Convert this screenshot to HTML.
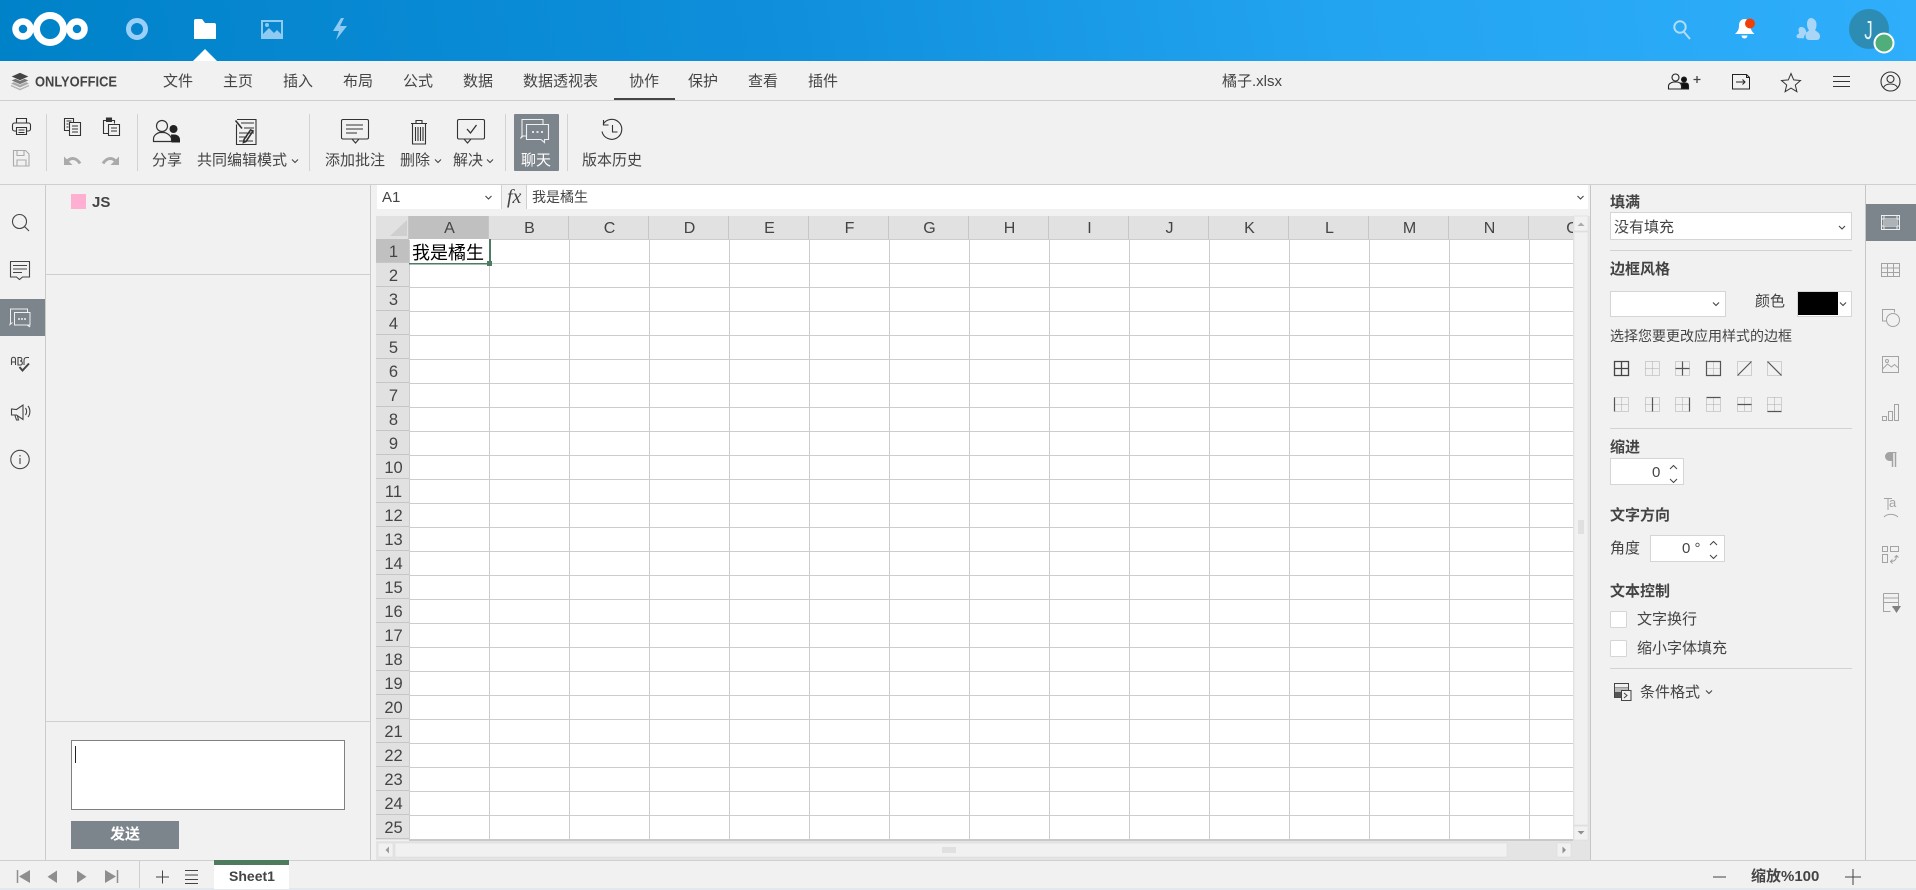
<!DOCTYPE html>
<html lang="zh"><head><meta charset="utf-8"><title>橘子.xlsx</title>
<style>
html,body{margin:0;padding:0;width:1916px;height:890px;overflow:hidden;background:#f1f1f1}
body{font-family:"Liberation Sans","Noto Sans CJK SC",sans-serif;color:#444;position:relative}
.t{position:absolute;white-space:nowrap;line-height:20px;height:20px;font-size:15px;color:#444;margin-top:1px}
.n{margin-top:0}
.b{font-weight:bold}
.c{text-align:center}
#hd{position:absolute;left:0;top:0;width:1916px;height:61px;background:linear-gradient(80deg,#0082c9 0%,#0f8fdb 40%,#23a4f0 70%,#2eaefb 100%)}
#grid{position:absolute;left:409px;top:239px;width:1164px;height:601px;background-color:#fff;background-image:linear-gradient(to right,transparent 79px,#cdcdcd 79px),linear-gradient(to bottom,transparent 23px,#cdcdcd 23px);background-size:80px 24px;background-position:1px 1px}
#cols{position:absolute;left:409px;top:216px;width:1164px;height:23px;overflow:hidden;display:flex;background:#e1e1e1}
#cols div{flex:0 0 80px;box-sizing:border-box;height:23px;line-height:26px;text-align:center;font-size:16px;color:#444;border-right:1px solid #c6c6c6;position:relative;left:1px;text-indent:2px}
#cols div.s{background:#c0c0c0;margin-left:-1px}
#rows{position:absolute;left:376px;top:239px;width:33px;height:601px;overflow:hidden;background:#e1e1e1}
#rows div{height:24px;box-sizing:border-box;line-height:26px;text-align:center;font-size:16.5px;color:#444;border-bottom:1px solid #c6c6c6;text-indent:2px}
#rows div.s{background:#c0c0c0}
svg{position:absolute;left:0;top:0}
</style></head><body>
<div id="hd"></div>
<div id="grid"></div>
<div id="cols"><div class="s">A</div><div>B</div><div>C</div><div>D</div><div>E</div><div>F</div><div>G</div><div>H</div><div>I</div><div>J</div><div>K</div><div>L</div><div>M</div><div>N</div><div style="text-indent:8px">O</div></div>
<div id="rows"><div class="s">1</div><div>2</div><div>3</div><div>4</div><div>5</div><div>6</div><div>7</div><div>8</div><div>9</div><div>10</div><div>11</div><div>12</div><div>13</div><div>14</div><div>15</div><div>16</div><div>17</div><div>18</div><div>19</div><div>20</div><div>21</div><div>22</div><div>23</div><div>24</div><div>25</div></div>

<svg width="1916" height="890" viewBox="0 0 1916 890" fill="none">
<!-- structural lines -->
<rect x="0" y="100" width="1916" height="1" fill="#cfcfcf"/>
<rect x="0" y="184" width="1916" height="1" fill="#cfcfcf"/>
<rect x="45" y="185" width="1" height="675" fill="#cbcbcb"/>
<rect x="370" y="185" width="1" height="675" fill="#cbcbcb"/>
<rect x="46" y="274" width="324" height="1" fill="#cfcfcf"/>
<rect x="46" y="721" width="324" height="1" fill="#cfcfcf"/>
<rect x="1590" y="185" width="1" height="675" fill="#c6c6c6"/>
<rect x="1865" y="185" width="1" height="675" fill="#c6c6c6"/>
<rect x="0" y="860" width="1916" height="1" fill="#cfcfcf"/>
<rect x="0" y="888" width="1916" height="2" fill="#e3e8ef"/>
<rect x="139" y="861" width="1" height="27" fill="#cfcfcf"/>
<!-- toolbar separators -->
<g fill="#d2d2d2"><rect x="46" y="114" width="1" height="57"/><rect x="137" y="114" width="1" height="57"/><rect x="309" y="114" width="1" height="57"/><rect x="505" y="114" width="1" height="57"/><rect x="567" y="114" width="1" height="57"/></g>
<!-- active tab underline -->
<rect x="614" y="98" width="61" height="2" fill="#444"/>
<!-- nextcloud logo -->
<g stroke="#fff"><circle cx="23" cy="29" r="7.5" stroke-width="6.5"/><circle cx="50" cy="29" r="13.5" stroke-width="7"/><circle cx="77" cy="29" r="7.5" stroke-width="6.5"/></g>
<circle cx="137" cy="29" r="8.5" stroke="#9ad0f7" stroke-width="5"/>
<path d="M194 21a2 2 0 0 1 2-2h6l3 4h9a2 2 0 0 1 2 2v14h-22z" fill="#fff"/>
<path d="M193 61l12-12 12 12z" fill="#fff"/>
<path fill-rule="evenodd" d="M261 20h22v19h-22zM263 22v12l6-6 5 5 3-3 4 4v-12zM267 27a2 2 0 1 0 0-4 2 2 0 0 0 0 4z" fill="#8fcaf2"/>
<path d="M341 18l-8 13h6l-3 9 11-14h-7l4-8z" fill="#8fcaf2"/>
<!-- header right -->
<circle cx="1680" cy="27" r="5.7" stroke="#afdcf9" stroke-width="2"/><path d="M1684 32l6 7" stroke="#afdcf9" stroke-width="2"/>
<path d="M1744.500 19c-3.500 0-5.500 3-5.500 6.500 0 4.500-1.500 6-4 8.500h19.500c-2.500-2.500-4-4-4-8.500 0-3.500-2.500-6.500-6-6.500z" fill="#fff"/><path d="M1741.500 35.500h6a3 3 0 0 1-6 0z" fill="#fff"/>
<circle cx="1750" cy="23.500" r="5" fill="#f0400a"/>
<path d="M1811 18c-2.500 0-4 2.500-4 6 0 3 1 5 2 6-1 2-3.500 2-3.500 5 0 3 1 5 4 5h7c3 0 3.500-2 3.500-4 0-3-3-4-5-6 1-1 1.500-3 1.500-6 0-3.500-3-6-5.500-6z" fill="#a9d6f6"/><path d="M1801 27c-1.500 0-2.500 1.300-2.500 3 0 1.300.4 2.500.8 3-.8 1.300-2.800 1.300-2.800 3 0 1.800 1 2.200 2.500 2.200h5c0-2.800 1-3.800 2.500-5.200-.5-2-1-6-5.500-6z" fill="#a9d6f6"/>
<circle cx="1869" cy="29" r="20" fill="#2c8cb4"/>
<circle cx="1884" cy="43" r="9.500" fill="#4fae7a" stroke="#fff" stroke-width="2"/>
<!-- onlyoffice stack -->
<path d="M20 79.500l-9 4 9 4 9-4z" fill="#a8a8a8"/><path d="M20 76.500l-9 4 9 4 9-4z" fill="#777" stroke="#f1f1f1" stroke-width=".6"/><path d="M20 72.500l-9 4 9 4 9-4z" fill="#444" stroke="#f1f1f1" stroke-width=".6"/>
<path d="M11 85.500l9 4 9-4" stroke="#b5b5b5" stroke-width="1.500"/>
<text x="35" y="86.500" font-family="Liberation Sans" font-weight="bold" font-size="15" fill="#444" textLength="82" lengthAdjust="spacingAndGlyphs">ONLYOFFICE</text>
<!-- top right doc icons -->
<g stroke="#222" stroke-width="1.100">
<circle cx="1675.500" cy="77.500" r="3.500"/><path d="M1668.500 89v-3c0-2.500 3-3.500 5-4h4c2 .5 4 1.500 4 4v3z"/>
<circle cx="1684" cy="79.500" r="2.500" fill="#111"/><path d="M1681 83h5c1.500 0 2.500 1 2.500 3v3h-6z" fill="#111"/>
<path d="M1697 76v7M1693.500 79.500h7" stroke="#444" stroke-width="1.300"/>
<path d="M1732.500 74.500h14l3 3v11.500h-17zM1746.500 74.500v3h3M1736 82h9M1742.500 79.500l2.500 2.500-2.500 2.500" stroke-width="1"/>
<path d="M1791 73.500l2.700 6.400 6.800.6-5.200 4.500 1.600 6.700-5.900-3.600-5.900 3.600 1.600-6.700-5.200-4.500 6.800-.6z" stroke="#333" stroke-width="1"/>
<path d="M1833 76.500h17M1833 81.500h17M1833 86.500h17" stroke="#333" stroke-width="1.100"/>
<circle cx="1890.500" cy="81.500" r="9.500" stroke="#333"/><circle cx="1890.500" cy="79" r="3.500" stroke="#333"/><path d="M1883.500 87.500c1.500-3 4-3.500 7-3.500s5.500.5 7 3.500" stroke="#333"/>
</g>
<!-- toolbar icons -->
<g stroke="#333" stroke-width="1.100">
<path d="M16.500 123v-4.500h10v4.500M16.500 131h-2a2 2 0 0 1-2-2v-4a2 2 0 0 1 2-2h14a2 2 0 0 1 2 2v4a2 2 0 0 1-2 2h-2"/><path d="M16.500 127.500h10v7h-10zM18.500 130h6M18.500 132.500h6"/>
<path d="M13.500 150.500h12l3.500 3.500v12h-15.500zM17 150.500v5h7v-5M17 166v-6h9v6" stroke="#aaa"/>
<path d="M69 130.500h-4.500v-12h9v3.500"/><path d="M69.500 122.500h11v13h-11zM72 126h6M72 129h6M72 132h6M66.500 121h5M66.500 124h2M66.500 127h2"/>
<path d="M108 133.500h-4.500v-13h11v3"/><path d="M106.500 118h5v3.500h-5z" fill="#333"/><path d="M108.500 124.500h11v11h-11zM111 128h6M111 131h6"/>
</g>
<path d="M64 156.500v8.500h8.500z" fill="#aaa"/><path d="M67 161.500c3.500-4 9-4.500 13 2" stroke="#aaa" stroke-width="3"/>
<path d="M119 156.500v8.500h-8.500z" fill="#aaa"/><path d="M116 161.500c-3.500-4-9-4.500-13 2" stroke="#aaa" stroke-width="3"/>
<g stroke="#333" stroke-width="1.200">
<circle cx="162" cy="126" r="5.500"/><path d="M153.500 141.500v-2.500c0-4 4-6 6-6.500h5c2 .5 6 2.500 7 6v3z"/>
</g>
<circle cx="173.500" cy="129" r="4" fill="#222"/><path d="M171 134.500h4c3 .5 5 2.500 5 5v3h-8.500z" fill="#222"/>
<g stroke="#333" stroke-width="1.100">
<path d="M237 119.500h19v25h-19.500v-20M241 123h13M244 128h10M239 133h15M239 137h8M239 141h14"/><path d="M235.500 120.500l6.500 8M253 131l-7 10.500-2.500 1 .5-3 6.500-9.500z" stroke-width="1.600"/>
<rect x="341.500" y="119.500" width="27" height="19.500" rx="1.500"/><path d="M352 139l3.500 4 3.500-4"/><path d="M347 125h17M347 129h17M347 133h11" transform="translate(-1,0)"/>
<path d="M411 123.500h16M416 123.500v-3h6v3M412.500 123.500h13v20.500h-13zM415.500 127v14M418 127v14M420.500 127v14M423 127v14"/>
<rect x="457.500" y="119.500" width="27" height="19.500" rx="1.500"/><path d="M464 139l3.500 4 3.500-4"/><path d="M467 129l3.500 4 6-8" stroke-width="1.300"/>
</g>
<rect x="514" y="114" width="45" height="57" rx="1" fill="#7d858c"/>
<g stroke="#eef0f1" stroke-width="1.100">
<path d="M522 136v-16.500h21v5M522 136l-1.500 2.500 2.500-2.500h3"/><path d="M526.500 124.500h22v15h-4v3l-3.500-3h-14.500z" /><path d="M532 132h2M536.500 132h2M541 132h2" stroke-width="1.800"/>
</g>
<g stroke="#333" stroke-width="1.100">
<path d="M603 124.500a10 10 0 1 1-1 7"/><path d="M603.500 120v5h5M612.500 125v7h5"/>
</g>
<!-- formula bar -->
<rect x="377" y="185" width="124" height="24" fill="#fff"/>
<rect x="527" y="185" width="1061" height="24" fill="#fff"/>
<rect x="501" y="185" width="1" height="24" fill="#d0d0d0"/><rect x="526" y="185" width="1" height="24" fill="#d0d0d0"/>
<path d="M485.500 196l3 3 3-3M1577.500 196l3 3 3-3" stroke="#444" stroke-width="1.100"/>
<!-- grid corner + selection -->
<rect x="376" y="216" width="33" height="23" fill="#e1e1e1"/>
<path d="M407 220v16h-17z" fill="#cfcfcf"/>
<rect x="376" y="239" width="33" height="24" fill="none"/>
<rect x="408" y="216" width="1" height="24" fill="#c6c6c6"/>
<rect x="409" y="239" width="80" height="1" fill="#fff"/>
<rect x="409" y="263" width="80" height="1.500" fill="#4f7a63"/>
<rect x="489" y="239" width="2" height="24" fill="#4f7a63"/>
<rect x="487" y="261" width="5" height="5" fill="#4f7a63"/>
<rect x="409" y="839" width="1164" height="2" fill="#c9c9c9"/>
<!-- vertical scrollbar -->
<rect x="1573" y="216" width="17" height="644" fill="#e4e4e4"/>
<rect x="1574" y="216" width="14" height="15" fill="#f1f1f1" stroke="#d8d8d8" stroke-width=".5"/>
<rect x="1574" y="232" width="14" height="593" fill="#f1f1f1" stroke="#d8d8d8" stroke-width=".5"/>
<rect x="1574" y="826" width="14" height="14" fill="#f1f1f1" stroke="#d8d8d8" stroke-width=".5"/>
<path d="M1577.500 226l3.500-3.500 3.500 3.500z" fill="#aaa"/><path d="M1577.500 831l3.500 3.500 3.500-3.500z" fill="#8f8f8f"/>
<path d="M1578 521h6M1578 523h6M1578 525h6M1578 527h6M1578 529h6M1578 531h6M1578 533h6" stroke="#cfcfcf"/>
<!-- horizontal scrollbar -->
<rect x="376" y="841" width="1214" height="19" fill="#e4e4e4"/>
<rect x="378" y="843" width="15" height="14" fill="#f1f1f1" stroke="#d8d8d8" stroke-width=".5"/>
<rect x="395" y="843" width="1112" height="14" fill="#f1f1f1" stroke="#d8d8d8" stroke-width=".5"/>
<rect x="1557" y="843" width="14" height="14" fill="#f1f1f1" stroke="#d8d8d8" stroke-width=".5"/>
<path d="M389 846.500l-3.500 3.500 3.500 3.500z" fill="#9c9c9c"/><path d="M1562.500 846.500l3.500 3.500-3.500 3.500z" fill="#8f8f8f"/>
<path d="M943 847v6M945 847v6M947 847v6M949 847v6M951 847v6M953 847v6M955 847v6" stroke="#cfcfcf"/>
<!-- left rail -->
<g stroke="#444" stroke-width="1.100">
<circle cx="19.500" cy="221.500" r="7"/><path d="M24.500 226.500l4.500 4.500"/>
<path d="M10.500 261.500h19v15.500h-7l-3 2.500-3-2.500h-6zM13 265.500h14M13 269h14M13 272.500h9"/>
</g>
<rect x="0" y="299" width="45" height="37" fill="#7d858c"/>
<g stroke="#eef0f1">
<path d="M10.500 322.500v-13.500h17v3M10.500 322.500l-.5 2 2.500-2"/><path d="M14.500 312.500h15.500v12.500h-1.500l1.500 2-3-2h-12.500z"/><path d="M18 319h2M21 319h2M24 319h2" stroke-width="1.500"/>
</g>
<g stroke="#444" stroke-width="1.100">
<path d="M11.500 365v-5.500c0-3 4-3 4 0v5.500M11.500 362h4M18 357.500v7.500h2.500c2.500 0 2.500-4-.5-4 2.500 0 2.500-3.500 0-3.500zM29 357.500h-2c-2.500 0-3 1-3 3.500v4"/><path d="M19.500 367l3 3.500 6.500-7" stroke-width="2"/>
<path d="M11.500 409v6h5l6.500 4.500v-14.500l-6.500 4.500zM15 415.500l1.500 4.500h2l-1-4M25.500 408c1.500 2 1.500 5 0 7M28 406c2.500 3 2.500 8 0 11"/>
<circle cx="20" cy="459.500" r="9.200"/><path d="M20 458v6M20 455v1.500"/>
</g>
<!-- chat -->
<rect x="71" y="194" width="15" height="15" fill="#ffb0d2"/>
<rect x="71.500" y="740.500" width="273" height="69" fill="#fff" stroke="#808080"/>
<rect x="75" y="746" width="1" height="17" fill="#222"/>
<rect x="71" y="821" width="108" height="28" fill="#7d858c"/>
<!-- bottom bar -->
<path d="M17.500 870v13" stroke="#8e8e8e" stroke-width="1.500"/><path d="M30 870v13l-11-6.500z" fill="#8e8e8e"/>
<path d="M57 870.500v12.500l-9.500-6.300z" fill="#8e8e8e"/><path d="M77 870.500v12.500l9.500-6.300z" fill="#8e8e8e"/>
<path d="M105 870v13l11-6.500z" fill="#8e8e8e"/><path d="M117.500 870v13" stroke="#8e8e8e" stroke-width="1.500"/>
<path d="M156 877h13M162.500 870.500v13M185 870.500h13M185 875h13M185 879.500h13M185 883.500h13" stroke="#444"/>
<rect x="214" y="860" width="75" height="29" fill="#fff"/><rect x="214" y="860" width="75" height="5" fill="#4e7a5e"/>
<path d="M1713 877h13M1845 877h16M1853 869v16" stroke="#444"/>
<!-- right panel -->
<g fill="#fff" stroke="#d5d5d5">
<rect x="1610.500" y="212.500" width="241" height="27"/>
<rect x="1610.500" y="291.500" width="115" height="25"/>
<rect x="1797.500" y="291.500" width="54" height="25"/>
<rect x="1610.500" y="458.500" width="73" height="26"/>
<rect x="1650.500" y="535.500" width="74" height="26"/>
<rect x="1610.500" y="611.500" width="16" height="16" rx="1"/>
<rect x="1610.500" y="640.500" width="16" height="16" rx="1"/>
</g>
<rect x="1798" y="292" width="40" height="23" fill="#000"/>
<path d="M1839 226l3 3 3-3M1713 302.500l3 3 3-3M1840 302.500l3 3 3-3" stroke="#444" stroke-width="1.100"/>
<path d="M1670 469l3.500-3.500 3.500 3.500M1670 479l3.500 3.500 3.500-3.500M1710 545l3.500-3.500 3.500 3.500M1710 555l3.500 3.500 3.500-3.500" stroke="#444"/>
<g fill="#d2d2d2"><rect x="1610" y="250" width="242" height="1"/><rect x="1610" y="428" width="242" height="1"/><rect x="1610" y="668" width="242" height="1"/></g>
<!-- border pattern icons -->
<g stroke="#444" stroke-width="1.300"><path d="M1614.500 361.500h14v14h-14zM1621.500 361.500v14M1614.500 368.500h14"/></g>
<g stroke="#aaa" stroke-dasharray="1 1"><path d="M1645.500 361.500h14v14h-14zM1652.500 361.500v14M1645.500 368.500h14"/>
<path d="M1675.500 361.500h14v14h-14z"/><path d="M1706.500 361.500h14M1706.500 368.500h14M1713.500 361.500v14"/><path d="M1737.500 361.500h14v14h-14z"/><path d="M1767.500 361.500h14v14h-14z"/>
<path d="M1614.500 397.500h14v14h-14zM1621.500 397.500v14M1614.500 404.500h14M1645.500 397.500h14v14h-14zM1645.500 404.500h14M1675.500 397.500h14v14h-14zM1682.500 397.500v14M1675.500 404.500h14M1706.500 397.500h14v14h-14zM1713.500 397.500v14M1706.500 404.500h14M1737.500 397.500h14v14h-14zM1744.500 397.500v14M1767.500 397.500h14v14h-14zM1774.500 397.500v14M1767.500 404.500h14"/></g>
<g stroke="#555" stroke-width="1.200">
<path d="M1682.500 361.500v14M1675.500 368.500h14"/>
<path d="M1706.500 361.500h14v14h-14z"/>
<path d="M1737.500 375.500l14-14M1767.500 361.500l14 14"/>
<path d="M1614.500 397.500v14M1652.500 397.500v14M1689.500 397.500v14M1706.500 397.500h14M1737.500 404.500h14M1767.500 411.500h14"/>
</g>
<!-- cond fmt icon -->
<path d="M1614.500 683.500h14v14h-14zM1614.500 688h14" stroke="#444"/><rect x="1615" y="688" width="13" height="4" fill="#bbb"/><rect x="1615" y="692" width="13" height="5.500" fill="#555"/>
<rect x="1621.500" y="690.500" width="9.500" height="10" fill="#f1f1f1" stroke="#444"/><path d="M1624 693l3 2.500-3 2.500" stroke="#444"/>
<!-- right rail -->
<rect x="1866" y="204" width="50" height="37" fill="#7d858c"/>
<path d="M1881.500 215.500h18v14h-18zM1884 215.500v14M1897 215.500v14M1881.500 219h18M1881.500 226h18" stroke="#eef0f1"/><rect x="1884" y="219" width="13" height="7" fill="#aeb3b8"/>
<g stroke="#a3a3a3">
<path d="M1881.500 263.500h18v13h-18zM1881.500 268h18M1881.500 272.500h18M1887.500 263.500v13M1893.500 263.500v13"/>
<path d="M1889 321h-6.500v-11.500h12v3"/><circle cx="1893" cy="320" r="6.500" fill="#f1f1f1"/>
<path d="M1882.500 356.500h16v16h-16zM1882.500 369l5-5 4 3 3-2.500 4 3.500"/><circle cx="1887" cy="361" r="1.500"/>
<path d="M1882.500 416.500h4v4h-4zM1888.500 411.500h4v9h-4zM1894.500 404.500h4v16h-4z"/>
<path d="M1892.500 453v14M1895.500 453v14" stroke-width="1.500"/><path d="M1892.500 452.500h-3a4 4 0 0 0 0 8h3z" fill="#a3a3a3"/><path d="M1892 452.500h4.500"/>
<path d="M1884 498.500h8M1888 498.500v11.500" /><path d="M1884 517c3-3.500 10-3.500 14 0"/>
<path d="M1882.500 546.500h5v5h-5zM1890.500 546.500h8v5h-8zM1882.500 554.500h5v8h-5zM1890.500 561.500c4 0 6-2 6-6M1894.500 557.500l2-2 2 2M1892.500 559.500l-2 2 2 2"/>
<path d="M1883.500 593.500h15v14h-6M1883.500 593.500v18h7M1883.500 598h15M1883.500 602.500h15"/>
</g>
<text x="1889" y="507" font-family="Liberation Sans" font-size="13" fill="#a3a3a3">a</text>
<path d="M1892 606h9l-4.500 7z" fill="#808080"/>
</svg>

<!-- tabs -->
<div class="t" style="left:163px;top:71px">文件</div>
<div class="t" style="left:223px;top:71px">主页</div>
<div class="t" style="left:283px;top:71px">插入</div>
<div class="t" style="left:343px;top:71px">布局</div>
<div class="t" style="left:403px;top:71px">公式</div>
<div class="t" style="left:463px;top:71px">数据</div>
<div class="t" style="left:523px;top:71px">数据透视表</div>
<div class="t" style="left:629px;top:71px">协作</div>
<div class="t" style="left:688px;top:71px">保护</div>
<div class="t" style="left:748px;top:71px">查看</div>
<div class="t" style="left:808px;top:71px">插件</div>
<div class="t" style="left:1222px;top:71px">橘子.xlsx</div>
<div class="t n" style="left:1862px;top:18px;font-size:26px;line-height:25px;height:25px;color:#e6f3f8;transform:scaleX(.65)">J</div>

<!-- toolbar labels -->
<div class="t" style="left:152px;top:150px">分享</div>
<div class="t" style="left:197px;top:150px">共同编辑模式</div>
<div class="t" style="left:325px;top:150px">添加批注</div>
<div class="t" style="left:400px;top:150px">删除</div>
<div class="t" style="left:453px;top:150px">解决</div>
<div class="t" style="left:521px;top:150px;color:#fff">聊天</div>
<div class="t" style="left:582px;top:150px">版本历史</div>
<svg width="1916" height="890" viewBox="0 0 1916 890" fill="none" style="pointer-events:none"><path d="M292 159.500l3 3 3-3M435 159.500l3 3 3-3M487 159.500l3 3 3-3M1706 690.500l3 3 3-3" stroke="#444" stroke-width="1.100"/></svg>

<!-- formula -->
<div class="t" style="left:382px;top:187px;font-size:15px">A1</div>
<div class="t n" style="left:507px;top:187px;font-family:'Liberation Serif',serif;font-style:italic;font-size:20px">fx</div>
<div class="t n" style="left:532px;top:187px;font-size:14px">我是橘生</div>
<div class="t" style="left:412px;top:242px;font-size:18px;color:#000">我是橘生</div>

<!-- chat -->
<div class="t b" style="left:92px;top:192px;font-size:15px">JS</div>
<div class="t b c n" style="left:71px;top:825px;width:108px;font-size:15px;color:#fff">发送</div>

<!-- bottom -->
<div class="t b c n" style="left:215px;top:866px;width:74px;font-size:14px">Sheet1</div>
<div class="t b" style="left:1751px;top:866px;font-size:15px">缩放%100</div>

<!-- right panel text -->
<div class="t b" style="left:1610px;top:192px">填满</div>
<div class="t" style="left:1614px;top:217px">没有填充</div>
<div class="t b" style="left:1610px;top:259px">边框风格</div>
<div class="t" style="left:1755px;top:291px">颜色</div>
<div class="t" style="left:1610px;top:325px;font-size:14px">选择您要更改应用样式的边框</div>
<div class="t b" style="left:1610px;top:437px">缩进</div>
<div class="t" style="left:1652px;top:462px">0</div>
<div class="t b" style="left:1610px;top:505px">文字方向</div>
<div class="t" style="left:1610px;top:538px">角度</div>
<div class="t" style="left:1682px;top:538px">0 °</div>
<div class="t b" style="left:1610px;top:581px">文本控制</div>
<div class="t n" style="left:1637px;top:610px">文字换行</div>
<div class="t" style="left:1637px;top:638px">缩小字体填充</div>
<div class="t" style="left:1640px;top:682px">条件格式</div>
</body></html>
